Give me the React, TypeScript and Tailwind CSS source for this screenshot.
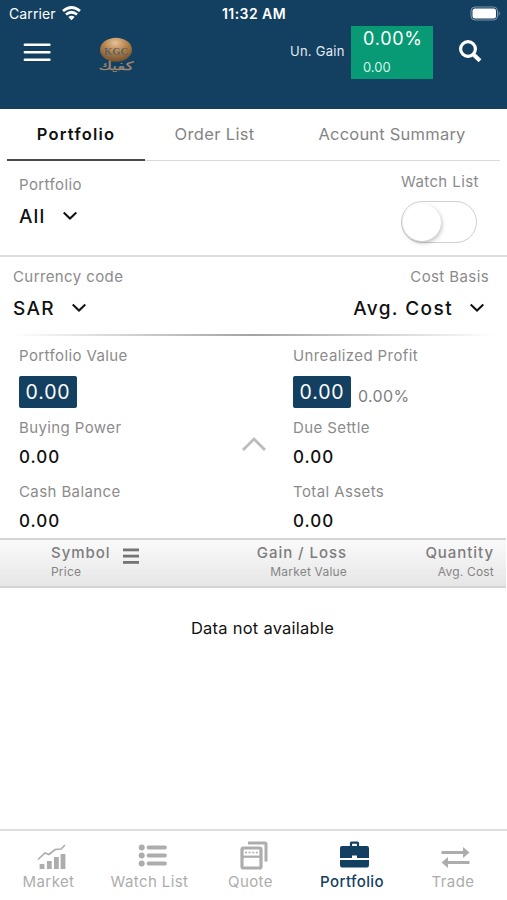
import type { ReactNode } from "react";

function Chevron() {
  return (
    <svg className="-mt-[2px]" width="16" height="10" viewBox="0 0 16 10" fill="none" stroke="#111" strokeWidth="2">
      <path d="M1.7 1.5 L8 7.5 L14.3 1.5" />
    </svg>
  );
}

function Label({ children }: { children: ReactNode }) {
  return <div className="h-5 pt-px text-[15px] leading-5 tracking-[0.4px] text-[#8b8b8b]">{children}</div>;
}

function Figure({ children }: { children: ReactNode }) {
  return <div className="h-6 text-[17px] leading-6 font-medium tracking-[1px] text-[#111]">{children}</div>;
}

function Pill({ children }: { children: ReactNode }) {
  return (
    <div className="h-8 w-[58px] rounded-[2px] bg-[#133f61] text-center text-[19.5px] leading-[33px] tracking-[0.9px] text-white">
      {children}
    </div>
  );
}

function Header() {
  return (
    <header className="h-[109px] bg-[#133f61] text-white">
      <div className="flex h-[26px] items-center pt-[2px]">
        <div className="flex w-[169px] items-center gap-[6px] pl-[9px] text-[14px] leading-none tracking-[0.1px]">
          <span>Carrier</span>
          <svg className="-mt-[2px]" width="19" height="15" viewBox="0 0 19 15" fill="none" stroke="white" strokeWidth="2.8">
            <path d="M1 5 Q9.5 -2 18 5" />
            <path d="M4 8.5 Q9.5 3.9 15 8.5" />
            <path d="M6.3 11 Q9.5 8.4 12.7 11 L9.5 14.2 Z" fill="white" stroke="none" />
          </svg>
        </div>
        <div className="w-[170px] pb-px text-center text-[14px] leading-none font-semibold tracking-[0.45px]">11:32 AM</div>
        <div className="flex w-[168px] justify-end pr-[6px]">
          <svg className="-mt-[2px]" width="31" height="15" viewBox="0 0 31 15">
            <rect x="1" y="1" width="26.5" height="13" rx="4" fill="none" stroke="#7f97aa" strokeWidth="1" />
            <rect x="2.5" y="2.5" width="23.5" height="10" rx="2.5" fill="white" />
            <path d="M28.7 5 Q31 7.5 28.7 10 Z" fill="#7f97aa" />
          </svg>
        </div>
      </div>
      <div className="flex h-[53px] items-start">
        <svg className="mt-[17px] ml-[23px]" width="28" height="19" viewBox="0 0 28 19" stroke="white" strokeWidth="2.6" strokeLinecap="round">
          <path d="M1.9 1.8 H26.4 M1.9 9.2 H26.4 M1.9 16.7 H26.4" />
        </svg>
        <svg className="mt-[10px] ml-[46px]" width="38" height="38" viewBox="0 0 38 38">
          <defs>
            <radialGradient id="gold" cx="0.48" cy="0.22" r="0.75">
              <stop offset="0" stopColor="#e5c29b" />
              <stop offset="0.45" stopColor="#ba8750" />
              <stop offset="1" stopColor="#78552f" />
            </radialGradient>
          </defs>
          <ellipse cx="19" cy="13.7" rx="16" ry="12" fill="url(#gold)" />
          <text x="19" y="18.5" textAnchor="middle" fontSize="11" fontWeight="700" fontFamily="Liberation Serif, serif" fill="#5b6468" textLength="24" lengthAdjust="spacingAndGlyphs">KGC</text>
          <text x="19" y="33.5" textAnchor="middle" fontSize="11.5" fontFamily="DejaVu Sans, sans-serif" fill="#a08770" stroke="#a08770" strokeWidth="0.3" textLength="35" lengthAdjust="spacingAndGlyphs">كفيك</text>
        </svg>
        <div className="mt-[16px] ml-[155px] w-[61px] text-[13px] leading-[18px] tracking-[0.25px] whitespace-nowrap text-[#e1e9ef]">Un. Gain</div>
        <div className="h-[53px] w-[82px] bg-[#079a74] pl-3">
          <div className="h-6 pt-px text-[18px] leading-6 tracking-[0.75px] whitespace-nowrap">0.00%</div>
          <div className="mt-[7px] h-5 text-[13px] leading-5 text-[#d6f3e9]">0.00</div>
        </div>
        <svg className="mt-[14px] ml-[26px]" width="23" height="23" viewBox="0 0 23 23" fill="none" stroke="white">
          <circle cx="9" cy="9" r="7.4" strokeWidth="3.2" />
          <path d="M14.5 14.5 L21 20.8" strokeWidth="4" />
        </svg>
      </div>
    </header>
  );
}

function Tabs() {
  return (
    <nav className="mx-[7px] flex h-[52px] border-b border-[#d9d9d9] text-[16.5px] leading-[50px] tracking-[0.35px] whitespace-nowrap text-[#858585]">
      <div className="h-[52px] w-[138px] border-b-2 border-[#4a4a4a] text-center font-semibold tracking-[1.25px] text-[#111]">Portfolio</div>
      <div className="w-[139px] text-center">Order List</div>
      <div className="w-[216px] text-center tracking-[0.22px]">Account Summary</div>
    </nav>
  );
}

function Filters() {
  return (
    <>
      <section className="flex h-[96px] justify-between border-b-2 border-[#dedede] pt-[13px] pr-[26px] pl-[19px]">
        <div>
          <Label>Portfolio</Label>
          <div className="mt-[11px] flex h-6 items-center gap-[17px] text-[19px] leading-6 font-medium tracking-[1.1px] text-[#111]">
            All
            <Chevron />
          </div>
        </div>
        <div className="-mt-[3px] w-[80px]">
          <Label>Watch List</Label>
          <div className="mt-[10px] h-[42px] w-[76px] rounded-full border border-[#d0d0d0]">
            <div className="mt-[2px] ml-[1px] h-[37px] w-[38px] rounded-full bg-white shadow-[1px_2px_4px_rgba(0,0,0,0.25)]" />
          </div>
        </div>
      </section>
      <section className="flex h-[77px] justify-between pt-[9px] pr-[18px] pl-[13px]">
        <div>
          <Label>Currency code</Label>
          <div className="mt-[11px] flex h-6 items-center gap-[16px] text-[19px] leading-6 font-medium tracking-[1.3px] text-[#111]">
            SAR
            <Chevron />
          </div>
        </div>
        <div className="flex flex-col items-end">
          <Label>Cost Basis</Label>
          <div className="mt-[11px] mr-[4px] flex h-6 items-center gap-4 text-[19px] leading-6 font-medium tracking-[1.4px] text-[#111]">
            Avg. Cost
            <Chevron />
          </div>
        </div>
      </section>
      <div className="mx-3 h-[2px] bg-linear-to-r from-white via-[#a3a3a3] to-white" />
    </>
  );
}

function Summary() {
  return (
    <section className="flex h-[202px] pt-[9px] pl-[19px]">
      <div className="w-[222px]">
        <Label>Portfolio Value</Label>
        <div className="mt-[11px]"><Pill>0.00</Pill></div>
        <div className="mt-[9px]"><Label>Buying Power</Label></div>
        <div className="mt-[8px]"><Figure>0.00</Figure></div>
        <div className="mt-[12px]"><Label>Cash Balance</Label></div>
        <div className="mt-[8px]"><Figure>0.00</Figure></div>
      </div>
      <svg className="mt-[91px]" width="26" height="16" viewBox="0 0 26 16" fill="none" stroke="#bcbcbc" strokeWidth="2.8">
        <path d="M2 14 L13 3 L24 14" />
      </svg>
      <div className="ml-[26px]">
        <Label>Unrealized Profit</Label>
        <div className="mt-[11px] flex gap-[7px]">
          <Pill>0.00</Pill>
          <span className="pt-[8px] text-[16px] leading-6 tracking-[0.35px] text-[#808080]">0.00%</span>
        </div>
        <div className="mt-[9px]"><Label>Due Settle</Label></div>
        <div className="mt-[8px]"><Figure>0.00</Figure></div>
        <div className="mt-[12px]"><Label>Total Assets</Label></div>
        <div className="mt-[8px]"><Figure>0.00</Figure></div>
      </div>
    </section>
  );
}

function Heading({ top, bottom }: { top: string; bottom: string }) {
  return (
    <>
      <div className="h-5 text-[15px] leading-5 font-medium tracking-[0.95px] text-[#7d7d7d]">{top}</div>
      <div className="h-[18px] text-[12px] leading-[18px] tracking-[0.2px] text-[#858585]">{bottom}</div>
    </>
  );
}

function TableHead() {
  return (
    <div className="mr-[1px] flex h-[50px] border-y-2 border-[#d4d4d4] bg-linear-to-b from-[#fafafa] to-[#e6e6e6] pt-[3px] pl-[51px]">
      <div className="w-[72px]"><Heading top="Symbol" bottom="Price" /></div>
      <svg className="mt-[5px]" width="16" height="17" viewBox="0 0 16 17" fill="#747474">
        <rect y="0.5" width="16" height="2.8" />
        <rect y="6.7" width="16" height="2.8" />
        <rect y="13" width="16" height="2.8" />
      </svg>
      <div className="w-[208px] text-right"><Heading top="Gain / Loss" bottom="Market Value" /></div>
      <div className="w-[147px] text-right"><Heading top="Quantity" bottom="Avg. Cost" /></div>
    </div>
  );
}

function NavItem({ label, width, active, children }: { label: string; width: string; active?: boolean; children: ReactNode }) {
  return (
    <div className={`flex flex-col items-center ${width} ${active ? "font-medium text-[#133f61]" : "text-[#adadad]"}`}>
      <svg className="mt-[10px]" width="34" height="30" viewBox="0 0 34 30" fill="none" stroke="currentColor">{children}</svg>
      <span className="mt-px h-5 text-[15px] leading-5 tracking-[0.4px] whitespace-nowrap">{label}</span>
    </div>
  );
}

function BottomNav() {
  return (
    <nav className="flex h-[71px] border-t-2 border-[#dedede]">
      <NavItem label="Market" width="w-[97px]">
        <g transform="translate(5 0)">
          <path d="M1 18.5 L8 12 L12 13.5 L18 8.5 L24 8 L28 4" strokeWidth="1.7" />
          <path d="M5 28 V23 M12.3 28 V20 M19.4 28 V16 M26 28 V13" strokeWidth="4.8" />
        </g>
      </NavItem>
      <NavItem label="Watch List" width="w-[105px]">
        <g transform="translate(5.5 0)">
          <path d="M10 6.5 H26.5 M10 14.5 H26.5 M10 22.5 H26.5" strokeWidth="3.8" strokeLinecap="round" />
          <g fill="currentColor" stroke="none">
            <circle cx="3.2" cy="6.5" r="3" />
            <circle cx="3.2" cy="14.5" r="3" />
            <circle cx="3.2" cy="22.5" r="3" />
          </g>
        </g>
      </NavItem>
      <NavItem label="Quote" width="w-[97px]">
        <g transform="translate(5 0)">
          <rect x="3" y="7" width="19" height="20" rx="1.5" strokeWidth="3.2" />
          <path d="M3 15.7 H22" strokeWidth="2.2" />
          <path d="M6 11.5 H20" strokeWidth="1.6" strokeDasharray="2 1.6" />
          <path d="M9 2 H26 Q27 2 27 3 V20.5" strokeWidth="3" />
        </g>
      </NavItem>
      <NavItem label="Portfolio" width="w-[106px]" active>
        <g transform="translate(5 0)">
          <path d="M11 6 V2.2 Q11 1.7 11.5 1.7 H17.5 Q18 1.7 18 2.2 V6" strokeWidth="2.2" />
          <path d="M2 5 H27 Q29 5 29 7 V17 H17 V14.5 H12 V17 H0 V7 Q0 5 2 5 Z M0 19 H29 V24 Q29 26.5 27 26.5 H2 Q0 26.5 0 24 Z" fill="currentColor" stroke="none" />
        </g>
      </NavItem>
      <NavItem label="Trade" width="w-[96px]">
        <g transform="translate(5 0)">
          <path d="M0.5 11.5 H24 M5 21.5 H28.5" strokeWidth="3.2" />
          <path d="M22 6 L28.5 11.5 L22 17 Z M7 16 L0.5 21.5 L7 27 Z" fill="currentColor" stroke="none" />
        </g>
      </NavItem>
    </nav>
  );
}

export default function App() {
  return (
    <main className="flex h-[900px] w-[507px] flex-col overflow-hidden bg-white font-['Inter','Liberation_Sans',sans-serif]">
      <Header />
      <Tabs />
      <Filters />
      <Summary />
      <TableHead />
      <div className="flex-1 pt-[28px] pl-[18px] text-center text-[16.5px] leading-6 tracking-[0.25px] text-[#111]">Data not available</div>
      <BottomNav />
    </main>
  );
}
